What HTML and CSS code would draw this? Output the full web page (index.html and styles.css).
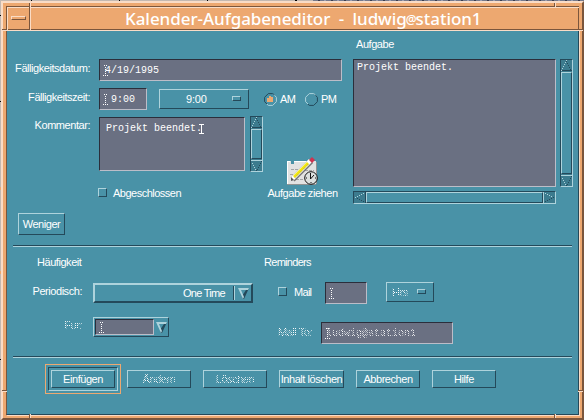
FILE: index.html
```html
<!DOCTYPE html>
<html lang="de">
<head>
<meta charset="utf-8">
<title>Kalender-Aufgabeneditor</title>
<link rel="stylesheet" href="styles.css">
</head>
<body>
<svg class="defs" width="0" height="0">
  <symbol id="up" viewBox="0 0 11 11"><path class="lo" d="M5 1.500h1M6 3.500h1M7 5.500h1M8 7.500h1M9 9.500h1M0 10.500h11"/><path class="hi" d="M5 .5h1M4 2.500h1M3 4.500h1M2 6.500h1M1 8.500h1M0 10.500h1"/></symbol>
  <symbol id="down" viewBox="0 0 11 11"><path class="hi" d="M0 .5h11M1 3.500h1M2 5.500h1M3 7.500h1M4 9.500h1"/><path class="lo" d="M9 3.500h1M8 5.500h1M7 7.500h1M6 9.500h1M5 10.500h1M10 1.500h1"/></symbol>
  <symbol id="left" viewBox="0 0 12 11"><path class="hi" d="M9 1.500h1M7 2.500h1M5 3.500h1M3 4.500h1M1 5.500h1"/><path class="lo" d="M9 9.500h1M7 8.500h1M5 7.500h1M3 6.500h1M11.500 0v11"/></symbol>
  <symbol id="right" viewBox="0 0 12 11"><path class="hi" d="M2 1.500h1M4 2.500h1M6 3.500h1M8 4.500h1M.5 0v11"/><path class="lo" d="M2 9.500h1M4 8.500h1M6 7.500h1M8 6.500h1M10 5.500h1"/></symbol>
  <symbol id="drop" viewBox="0 0 11 11"><path fill="#24495a" d="M11 0 6 11H5L4 8 8 2Z"/><path fill="#aed3dc" d="M0 0H11L10 2H3L6 9 5 11Z"/></symbol>
  <symbol id="radio" viewBox="0 0 13 13"><path class="lo" d="M9 .9 12.400 4.300V8.700L8.700 12.400H4.300L2 10.200"/><path class="hi" d="M10.500 2 8.700 .6H4.300L.6 4.300V8.700L3 11"/></symbol>
  <symbol id="radio-on" viewBox="0 0 13 13"><path class="hi" d="M9 .9 12.400 4.300V8.700L8.700 12.400H4.300L2 10.200"/><path class="lo" d="M10.500 2 8.700 .6H4.300L.6 4.300V8.700L3 11"/><path fill="#eda870" d="M5 3H7V4H9V9H3V5H5Z"/></symbol>
  <symbol id="ib" viewBox="0 0 5 11"><path stroke="#fff" stroke-dasharray="1 1" d="M0 10.500H5M2.500 2V10"/><path fill="#fff" d="M1 0h1v1h-1zM3 0h1v1h-1z"/></symbol>
</svg>
<div class="window">
  <i class="notch v top a"></i><i class="notch v top b"></i><i class="notch v bottom a"></i><i class="notch v bottom b"></i>
  <i class="notch h west a"></i><i class="notch h west b"></i><i class="notch h east a"></i><i class="notch h east b"></i>
  <header class="titlebar">
    <div class="menu-button"><span></span></div>
    <h1>Kalender-Aufgabeneditor - ludwig<small>@</small>station1</h1>
  </header>
  <main class="client">
    <section class="upper">
      <div class="form">
        <div class="row date"><label>Fälligkeitsdatum:</label><div class="field w-date"><svg class="caret" width="5" height="11"><use href="#ib"/></svg><span>4/19/1995</span></div></div>
        <div class="row time"><label>Fälligkeitszeit:</label><div class="field w-time"><svg class="caret" width="5" height="11"><use href="#ib"/></svg><span>9:00</span></div>
          <div class="option hour"><span>9:00</span><i></i></div>
          <div class="radio am"><svg width="13" height="13"><use href="#radio-on"/></svg><span>AM</span></div>
          <div class="radio"><svg width="13" height="13"><use href="#radio"/></svg><span>PM</span></div>
        </div>
        <div class="comment-block">
          <div class="comment">
            <div class="row note"><label>Kommentar:</label><div class="field area"><span>Projekt beendet.</span><svg class="ibeam" width="5" height="10"><path d="M0 .5H5M0 9.500H5M2.500 0V10"/></svg></div>
              <div class="scroll v"><svg width="11" height="11"><use href="#up"/></svg><b></b><svg width="11" height="11"><use href="#down"/></svg></div>
            </div>
            <div class="check done"><i></i><span>Abgeschlossen</span></div>
          </div>
          <div class="drag">
            <svg width="31" height="28" viewBox="0 0 31 28">
              <path fill="#e2e2e2" d="M0 4H4V7H7V4H29V27H0Z"/>
              <path stroke="#fff" d="M.5 4V27M0 4.500H3M7 4.500H20" fill="none"/>
              <path stroke="#8f9292" d="M0 27.500H29M29.500 5V27" fill="none"/>
              <path stroke="#a5a5a5" stroke-dasharray="3 1" d="M4 12.500H14M3 17.500H12M9 22.500H17M18 13.500H27"/>
              <path stroke="#777" stroke-width="6" d="M5.500 22.500 24 4"/>
              <path stroke="#fff" stroke-width="4.400" d="M5 22 23.500 3.500"/>
              <path stroke="#f1e514" stroke-width="2.800" d="M7 20 21 6"/>
              <path stroke="#a59b27" stroke-width=".8" stroke-dasharray="1 1" d="M8 20.500 22 6.500"/>
              <path fill="#cf3350" d="M22 3 25 0 28 3 25 6Z"/>
              <path fill="#555" d="M4 20 7 23 4 24Z"/>
              <circle cx="24" cy="21" r="6.300" fill="#dce0df" stroke="#111"/>
              <path stroke="#111" fill="none" d="M23.500 16V22L27 18M19 21H20M28 21H29M24 25V26"/>
            </svg>
            <span>Aufgabe ziehen</span>
          </div>
        </div>
        <button class="button less">Weniger</button>
      </div>
      <div class="task">
        <h2>Aufgabe</h2>
        <div class="task-grid">
          <div class="field list"><span>Projekt beendet.</span></div>
          <div class="scroll v"><svg width="11" height="11"><use href="#up"/></svg><b></b><svg width="11" height="11"><use href="#down"/></svg></div>
          <div class="scroll h"><svg width="12" height="11"><use href="#left"/></svg><b></b><svg width="12" height="11"><use href="#right"/></svg></div>
        </div>
      </div>
    </section>
    <hr>
    <section class="lower">
      <div class="frequency">
        <h2>Häufigkeit</h2>
        <div class="row"><label>Periodisch:</label><div class="combo"><span>One Time</span><em></em><svg width="11" height="11"><use href="#drop"/></svg></div></div>
        <div class="row for"><label><span class="off">Für:</span></label><div class="combo small"><div class="field"><svg class="caret" width="5" height="11"><use href="#ib"/></svg></div><svg width="11" height="11"><use href="#drop"/></svg></div></div>
      </div>
      <div class="reminders">
        <h2>Reminders</h2>
        <div class="row"><div class="check mail"><i></i><span>Mail</span></div><div class="field lead"><svg class="caret" width="5" height="11"><use href="#ib"/></svg></div><div class="option unit"><span class="off">Hrs</span><i></i></div></div>
        <div class="row mailto"><label><span class="off">Mail To:</span></label><div class="field address"><svg class="caret" width="5" height="11"><use href="#ib"/></svg><span class="off">ludwig@station1</span></div></div>
      </div>
    </section>
    <hr>
    <footer>
      <div class="default"><div><button class="button">Einfügen</button></div></div>
      <button class="button"><span class="off">Ändern</span></button>
      <button class="button"><span class="off">Löschen</span></button>
      <button class="button wide">Inhalt löschen</button>
      <button class="button">Abbrechen</button>
      <button class="button">Hilfe</button>
    </footer>
  </main>
</div>
</body>
</html>
```
FILE: styles.css
```css
* { box-sizing: border-box; }
:root {
  --teal: #4992a7; --hi: #aed3dc; --lo: #24495a; --trough: #3c7b8e;
  --orange: #eda870; --peach: #fadcc6; --brown: #7b563c;
  --field: #6a7082; --field-hi: #bcbdc8; --field-lo: #2b2e3b;
}
body {
  margin: 0; width: 584px; height: 420px; overflow: hidden;
  padding: 1px 0 0 1px;
  background:
    linear-gradient(#000, #000) 31px 0 / 1px 1px no-repeat,
    linear-gradient(#000, #000) 119px 0 / 1px 1px no-repeat,
    linear-gradient(#000, #000) 207px 0 / 1px 1px no-repeat,
    linear-gradient(#000, #000) 295px 0 / 2px 1px no-repeat,
    linear-gradient(#000, #000) 0 15px / 1px 1px no-repeat,
    linear-gradient(#000, #000) 0 101px / 1px 1px no-repeat,
    linear-gradient(#eda870, #eda870) 0 187px / 1px 3px no-repeat,
    linear-gradient(#eda870, #eda870) 0 271px / 1px 3px no-repeat,
    linear-gradient(#000, #000) 0 359px / 1px 1px no-repeat,
    repeating-linear-gradient(90deg, transparent 0 5px, #3a3c4c 5px 7px, transparent 7px 11px, #9a9cae 11px 13px) 313px 0 / 271px 1px no-repeat,
    linear-gradient(90deg, #c4b8b0 313px, #74788a 313px);
  color: #fff;
  font: 11px/13px "Liberation Sans", Arial, sans-serif;
  letter-spacing: -.45px;
}
.defs { position: absolute; }
.hi, .lo { fill: none; stroke-width: 1; }
.hi { stroke: #aed3dc; } .lo { stroke: #24495a; }
h1, h2 { margin: 0; font-size: 11px; font-weight: 400; }
span { white-space: nowrap; }

.window {
  position: relative; width: 583px; height: 419px; background: var(--orange);
  border: 2px solid; border-color: var(--peach) var(--brown) var(--brown) var(--peach);
  padding: 3px;
}
.notch { position: absolute; z-index: 2; }
.notch.v { width: 2px; height: 4px; background: linear-gradient(90deg, var(--brown) 1px, var(--peach) 1px); }
.notch.h { height: 2px; width: 5px; background: linear-gradient(var(--brown) 1px, var(--peach) 1px); }
.notch.top { top: 0; } .notch.bottom { bottom: 0; }
.notch.v.a { left: 26px; } .notch.v.b { left: 551px; }
.notch.west { left: -1px; } .notch.east { right: -1px; }
.notch.h.a { top: 26px; } .notch.h.b { top: 387px; }

.titlebar {
  display: flex; height: 24px;
  border-top: 1px solid var(--brown); border-left: 1px solid var(--brown);
  box-shadow: inset 1px 1px var(--peach), inset -1px -1px var(--brown);
}
.menu-button {
  width: 24px; padding: 9px 0 0 4px;
  border-right: 1px solid var(--peach); box-shadow: inset -1px 0 var(--brown);
}
.menu-button span {
  display: block; width: 15px; height: 4px; border: 1px solid;
  border-color: var(--peach) var(--brown) var(--brown) var(--peach);
}
h1 {
  flex: 1; padding-left: 94px; white-space: nowrap;
  font: 500 17px/23px "Noto Sans", "Open Sans", sans-serif; letter-spacing: -.05px; word-spacing: 4px;
}
h1 small { font-size: 12px; vertical-align: 1px; line-height: 1; margin: 0 -1px; }
.client {
  height: 385px; background: var(--teal); border: 1px solid;
  border-color: var(--peach) var(--lo) var(--lo) var(--brown);
  box-shadow: 1px 1px var(--peach); padding: 0 0 0 1px;
}
hr {
  margin: 0 0 0 5px; width: 559px; height: 2px; border: 0;
  background: linear-gradient(var(--lo) 1px, var(--hi) 1px);
}

.upper { display: flex; height: 214px; }
.form { width: 345px; padding-top: 28px; }
.row { display: flex; }
label { width: 82px; margin-right: 9px; text-align: right; }
.field {
  display: flex; background: var(--field); border: 1px solid;
  border-color: var(--field-lo) var(--field-hi) var(--field-hi) var(--field-lo);
  font: 10px/12px "Liberation Mono", monospace; letter-spacing: 0; height: 22px;
  padding: 5px 0 0 3px;
}
.caret { margin-right: -4px; flex: none; }
.date label { padding-top: 3px; }
.w-date { width: 243px; }
.w-date span { margin-left: 1px; }
.time { margin-top: 7px; }
.time label { padding-top: 3px; }
.w-time { width: 48px; }
.w-time span { margin-left: 7px; }
.option {
  display: flex; height: 20px; border: 1px solid;
  border-color: var(--hi) var(--lo) var(--lo) var(--hi);
}
.option i {
  width: 9px; height: 5px; margin: 6px 0 0 auto; border: 1px solid;
  border-color: var(--hi) var(--lo) var(--lo) var(--hi);
}
.hour { margin: 1px 0 0 12px; width: 90px; padding: 0 7px 0 26px; letter-spacing: -.2px; }
.hour span { padding-top: 3px; }
.radio { display: flex; margin-top: 5px; gap: 3px; width: 41px; letter-spacing: -.6px; }
.radio.am { margin-left: 15px; }
.comment-block { display: flex; margin-top: 6px; }
.comment { width: 255px; }
.note label { padding-top: 3px; }
.area { width: 146px; height: 54px; margin-top: 1px; padding: 5px 0 0 6px; }
.area .ibeam { margin: 1px 0 0 -3px; stroke: #fff; }
.scroll { display: flex; background: var(--trough); border: 1px solid; border-color: var(--lo) var(--hi) var(--hi) var(--lo); }
.scroll svg { flex: none; display: block; shape-rendering: crispEdges; }
.scroll b { flex: 1; background: var(--teal); border: 1px solid; border-color: var(--hi) var(--lo) var(--lo) var(--hi); }
.scroll.v { width: 13px; flex-direction: column; }
.scroll.v b { margin: 1px 0; }
.note .scroll { height: 56px; margin-left: 5px; }
.check { display: flex; }
.check i {
  width: 9px; height: 9px; border: 1px solid;
  border-color: var(--hi) var(--lo) var(--lo) var(--hi);
}
.done { margin: 16px 0 0 90px; gap: 6px; height: 9px; letter-spacing: -.5px; }
.done span { margin-top: -1px; }
.drag { width: 79px; padding-top: 41px; display: flex; flex-direction: column; align-items: center; }
.drag span { margin-top: 2px; }
.button {
  width: 64px; height: 18px; padding: 0; background: none; color: inherit;
  font: inherit; letter-spacing: inherit; white-space: nowrap; border: 1px solid;
  border-color: var(--hi) var(--lo) var(--lo) var(--hi);
}
.less { display: block; width: 47px; height: 22px; margin: 13px 0 0 10px; }

.task { padding-top: 7px; }
.task h2 { padding-left: 3px; height: 21px; }
.task-grid { display: grid; grid-template-columns: 203px 13px; grid-template-rows: 128px 13px; gap: 4px; }
.list { height: 128px; padding: 2px 0 0 3px; }

.lower { display: flex; height: 109px; }
.lower h2 { padding-top: 9px; }
.frequency { width: 256px; }
.frequency h2 { padding-left: 29px; height: 36px; }
.frequency label { width: 74px; margin-right: 11px; padding-top: 2px; }
.combo {
  display: flex; width: 160px; height: 20px; border: 2px solid;
  border-color: var(--hi) var(--lo) var(--lo) var(--hi);
}
.combo > span { margin: 2px 0 0 auto; letter-spacing: -.7px; }
.combo em { width: 2px; margin: 1px 3px 0 8px; height: 14px; background: linear-gradient(90deg, var(--lo) 1px, var(--hi) 1px); }
.combo > svg { margin: 3px 2px 0 0; }
.for { margin-top: 14px; }
.for label { padding-top: 2px; }
.small { width: 76px; border-width: 1px; padding: 1px; }
.small .field { width: 59px; height: 16px; padding: 2px 0 0 3px; margin-right: 2px; }
.small > svg { margin: 3px 0 0; }
.reminders h2 { height: 35px; letter-spacing: -.7px; }
.mail { width: 61px; padding: 5px 0 0 14px; gap: 7px; letter-spacing: -.7px; }
.mail span { margin-top: -1px; }
.lead { width: 42px; }
.unit { width: 48px; margin-left: 19px; padding: 0 7px 0 5px; }
.unit span { padding-top: 3px; }
.mailto { margin-top: 18px; }
.mailto label { width: 48px; padding-top: 4px; }
.address { width: 132px; }
.off {
  -webkit-mask: repeating-conic-gradient(#000 0 25%, transparent 0 50%) 0 0 / 2px 2px;
  mask: repeating-conic-gradient(#000 0 25%, transparent 0 50%) 0 0 / 2px 2px;
}

footer { display: flex; padding: 6px 0 0 37px; }
.default { border: 1px solid var(--orange); padding: 2px; width: 76px; height: 30px; margin-right: 6px; }
.default div { padding: 2px; height: 24px; border: 1px solid; border-color: var(--lo) var(--hi) var(--hi) var(--lo); }
footer > .button { margin: 6px 12px 0 0; flex: none; }
footer .wide { width: 65px; }
```
